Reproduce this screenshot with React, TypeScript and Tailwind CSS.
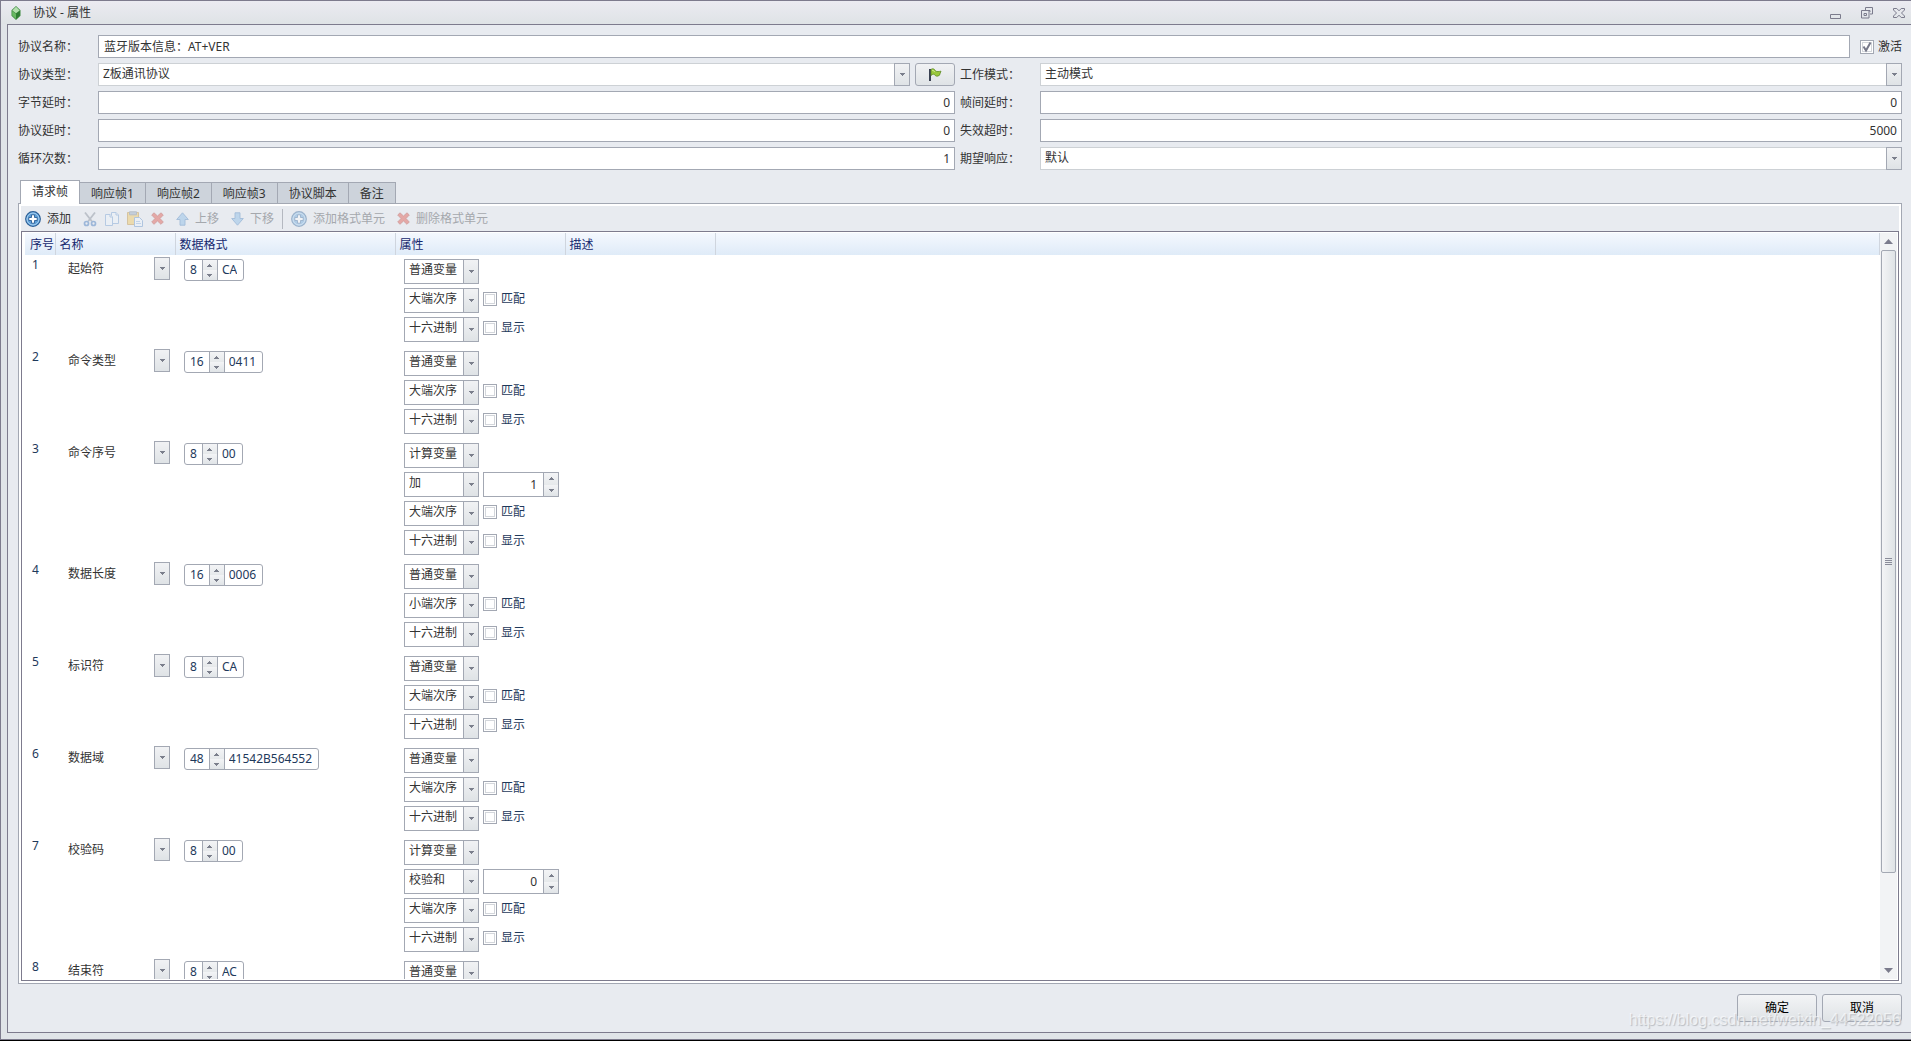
import type { ReactNode } from 'react';
import { clsx } from 'clsx';

interface FieldLine {
  value: string;
  check?: string;
  amount?: string;
}

interface UnitRow {
  name: string;
  bits: string;
  data: string;
  lines: FieldLine[];
}

const BIG: FieldLine = { value: '大端次序', check: '匹配' };
const LITTLE: FieldLine = { value: '小端次序', check: '匹配' };
const HEX: FieldLine = { value: '十六进制', check: '显示' };
const PLAIN: FieldLine = { value: '普通变量' };
const COMPUTED: FieldLine = { value: '计算变量' };

const rows: UnitRow[] = [
  { name: '起始符', bits: '8', data: 'CA', lines: [PLAIN, BIG, HEX] },
  { name: '命令类型', bits: '16', data: '0411', lines: [PLAIN, BIG, HEX] },
  { name: '命令序号', bits: '8', data: '00', lines: [COMPUTED, { value: '加', amount: '1' }, BIG, HEX] },
  { name: '数据长度', bits: '16', data: '0006', lines: [PLAIN, LITTLE, HEX] },
  { name: '标识符', bits: '8', data: 'CA', lines: [PLAIN, BIG, HEX] },
  { name: '数据域', bits: '48', data: '41542B564552', lines: [PLAIN, BIG, HEX] },
  { name: '校验码', bits: '8', data: '00', lines: [COMPUTED, { value: '校验和', amount: '0' }, BIG, HEX] },
  { name: '结束符', bits: '8', data: 'AC', lines: [PLAIN] },
];

const tabs = ['请求帧', '响应帧1', '响应帧2', '响应帧3', '协议脚本', '备注'];

/* Icons */

function Caret({ up = false }: { up?: boolean }) {
  return (
    <svg width="5" height="3" viewBox="0 0 5 3" fill="#7b7f8c" shapeRendering="crispEdges">
      <path d={up ? 'M2 0h1v1h1v1h1v1H0V2h1V1h1z' : 'M0 0h5v1H4v1H3v1H2V2H1V1H0z'} />
    </svg>
  );
}

function GemIcon() {
  return (
    <svg width="10" height="14" viewBox="0 0 10 14">
      <path d="M5 0 9.500 4.200v5.600L5 14 .5 9.800V4.200z" fill="#3c8a3e" />
      <path d="M5 .8 8.700 4.400 5 7.200 1.300 4.400z" fill="#b4e0ae" />
      <path d="M1.200 5 5 7.800V13L1.200 9.500z" fill="#68b962" />
      <path d="M8.800 5 5 7.800V13l3.800-3.500z" fill="#2f7d33" />
    </svg>
  );
}

function FlagIcon() {
  return (
    <svg width="14" height="14" viewBox="0 0 14 14">
      <path d="M2 1v12" stroke="#3a4152" strokeWidth="2" />
      <path d="M3 1.500c2-1.500 3.500-.5 4.500 1.500 1.500 1 3.500.5 5.500.2-.8 1-.8 3-1.500 4-2 1.500-4 1.300-5-.7C5.500 5.800 4 6.500 3 7.500z" fill="#9ac83c" stroke="#5d8a22" strokeWidth=".8" />
      <path d="M4 2.500c1.200-.6 2 .2 2.500 1.500" stroke="#d6ef95" fill="none" />
    </svg>
  );
}

function AddIcon() {
  return (
    <svg width="16" height="16" viewBox="0 0 16 16">
      <circle cx="8" cy="8" r="7.300" fill="#5d9fd8" stroke="#2b5f96" strokeWidth="1.200" />
      <circle cx="8" cy="8" r="6" fill="none" stroke="#b5d9f5" strokeWidth=".9" />
      <path d="M6.500 3.800h3v2.700h2.700v3H9.500v2.700h-3V9.500H3.800v-3h2.700z" fill="#fff" stroke="#2b5f96" strokeWidth=".9" />
    </svg>
  );
}

function CutIcon() {
  return (
    <svg width="14" height="16" viewBox="0 0 14 16" fill="none">
      <path d="M2 1.500 9 10.500M12 1.500 5 10.500" stroke="#7b8491" strokeWidth="1.800" />
      <circle cx="3.500" cy="12.500" r="2" stroke="#2f6cb8" strokeWidth="1.700" />
      <circle cx="10.500" cy="12.500" r="2" stroke="#2f6cb8" strokeWidth="1.700" />
    </svg>
  );
}

function CopyIcon() {
  return (
    <svg width="14" height="16" viewBox="0 0 14 16" fill="#eef5fd" stroke="#6d9ad0">
      <path d="M6.500 1.500h4.500l2.500 2.500v8.500h-7z" />
      <path d="M.5 3.500h4.500l2.500 2.500v8.500h-7z" />
      <path d="M5 3.500v2.500h2.500M11 1.500V4h2.500" />
    </svg>
  );
}

function PasteIcon() {
  return (
    <svg width="16" height="16" viewBox="0 0 16 16">
      <path d="M.5 1.500h11v12H.5z" fill="#f0c14b" stroke="#b98a2c" />
      <path d="M2.500.8h7v3h-7z" fill="#8fa5bd" stroke="#6f7c8c" />
      <path d="M7.500 6.500h5l3 3v6h-8z" fill="#eef5fd" stroke="#5f8ec6" />
      <path d="M9 10.500h4M9 12.500h5" stroke="#8cb1dd" />
    </svg>
  );
}

function DeleteIcon() {
  return (
    <svg width="13" height="13" viewBox="0 0 13 13">
      <path d="M3 .8 6.500 4 10 .8 12.300 3 9 6.500l3.300 3.500-2.300 2.300L6.500 9 3 12.300.7 10 4 6.500.7 3z" fill="#e0463a" stroke="#a92a22" strokeWidth=".8" />
    </svg>
  );
}

function ArrowIcon({ down = false }: { down?: boolean }) {
  return (
    <svg width="13" height="14" viewBox="0 0 13 14" className={clsx(down && 'rotate-180')}>
      <path d="M6.500.8 12.300 7.500H9v5.700H4V7.500H.7z" fill="#7fb5e6" stroke="#3c78b8" strokeWidth=".9" />
    </svg>
  );
}

function MinimizeIcon() {
  return (
    <svg width="11" height="13" viewBox="0 0 11 13" fill="none" stroke="#7b7b8c">
      <path d="M.5 8.500h10v4H.5z" />
    </svg>
  );
}

function RestoreIcon() {
  return (
    <svg width="12" height="12" viewBox="0 0 12 12" fill="none" stroke="#7b7b8c">
      <path d="M4.500 3V.5h7v6.500H9M.5 3.500h7.500v7.500H.5zM3 6.500h2.500v2H3zM7.500 3.500h1.500v1.500" />
    </svg>
  );
}

function CloseIcon() {
  return (
    <svg width="12" height="10" viewBox="0 0 12 10" fill="none" stroke="#7b7b8c">
      <path d="M.5.5h3.300L6 2.800 8.200.5h3.300v1.500L8.500 5l3 3v1.500H8.200L6 7.200 3.800 9.500H.5V8l3-3-3-3z" />
    </svg>
  );
}

/* Controls */

function DropButton({ label, className }: { label: string; className?: string }) {
  return (
    <button
      type="button"
      aria-label={label}
      className={clsx(
        'flex w-4 shrink-0 items-center justify-center border border-[#a3a8b3] bg-linear-to-b from-[#f1f2f4] to-[#dfe3e6]',
        className,
      )}
    >
      <Caret />
    </button>
  );
}

function Combo({ id, value }: { id: string; value: string }) {
  return (
    <div className="flex h-[23px] min-w-0 flex-1 bg-white">
      <select id={id} className="min-w-0 flex-1 appearance-none border border-r-0 border-[#cdd1d5] px-1 pb-0.5 outline-none">
        <option>{value}</option>
      </select>
      <DropButton label="展开" />
    </div>
  );
}

function TextField({ id, value, numeric = false }: { id: string; value: string; numeric?: boolean }) {
  return (
    <input
      id={id}
      defaultValue={value}
      className={clsx(
        'h-[23px] min-w-0 flex-1 border border-[#a3a8b3] bg-white outline-none',
        numeric ? 'px-1 text-right' : 'px-[5px] pb-0.5',
      )}
    />
  );
}

function Label({ htmlFor, children }: { htmlFor: string; children: ReactNode }) {
  return (
    <label htmlFor={htmlFor} className="self-center whitespace-nowrap">
      {children}
    </label>
  );
}

function Spinner({ className }: { className?: string }) {
  return (
    <div className={clsx('flex flex-col border-l border-[#a3a8b3]', className)}>
      <button type="button" aria-label="增加" className="flex flex-1 items-center justify-center bg-linear-to-b from-[#f3f4f6] to-[#e6e9eb]">
        <Caret up />
      </button>
      <button type="button" aria-label="减少" className="flex flex-1 items-center justify-center bg-linear-to-b from-[#f3f4f6] to-[#e0e4e7]">
        <Caret />
      </button>
    </div>
  );
}

function Check({ label, checked = false }: { label: string; checked?: boolean }) {
  return (
    <label className="flex items-center gap-1">
      <span className="grid size-3.5 shrink-0 border border-[#a3a8b3] bg-white">
        <input
          type="checkbox"
          defaultChecked={checked}
          className="peer m-px appearance-none border border-[#d3d6db] [grid-area:1/1]"
        />
        <svg
          viewBox="0 0 12 12"
          fill="none"
          stroke="#77798a"
          strokeWidth="2"
          className="pointer-events-none hidden size-3 [grid-area:1/1] peer-checked:block"
        >
          <path d="M2.500 5.500 5 9.500 9.500 1.500" />
        </svg>
      </span>
      {label}
    </label>
  );
}

function ToolButton({ icon, label, text, disabled = true }: { icon: ReactNode; label: string; text?: boolean; disabled?: boolean }) {
  return (
    <button
      type="button"
      disabled={disabled}
      aria-label={label}
      className="flex items-center gap-1.5 whitespace-nowrap text-[#333] disabled:text-[#a5a8ad]"
    >
      <span className={clsx(disabled && 'opacity-40')}>{icon}</span>
      {text && label}
    </button>
  );
}

/* Sections */

function TitleBar() {
  return (
    <header className="flex h-[23px] shrink-0 items-center bg-linear-to-b from-[#ebebf1] to-[#dfe3e6] pr-1.5 pl-2.5">
      <GemIcon />
      <h1 className="flex-1 pl-3 text-xs">协议 - 属性</h1>
      <div className="flex items-center gap-5">
        <button type="button" aria-label="最小化"><MinimizeIcon /></button>
        <button type="button" aria-label="还原"><RestoreIcon /></button>
        <button type="button" aria-label="关闭"><CloseIcon /></button>
      </div>
    </header>
  );
}

function ProtocolForm() {
  return (
    <div className="flex flex-col gap-[5px]">
      <div className="flex">
        <div className="grid flex-1 grid-cols-[80px_1fr]">
          <Label htmlFor="name">协议名称：</Label>
          <TextField id="name" value="蓝牙版本信息：AT+VER" />
        </div>
        <div className="flex w-[52px] justify-end">
          <Check label="激活" checked />
        </div>
      </div>
      <div className="grid grid-cols-[80px_1fr_80px_1fr] gap-y-[5px]">
        <Label htmlFor="type">协议类型：</Label>
        <div className="mr-[5px] flex gap-[5px]">
          <Combo id="type" value="Z板通讯协议" />
          <button
            type="button"
            aria-label="标记"
            className="flex w-10 items-center justify-center rounded-[3px] border border-[#a3a8b3] bg-linear-to-b from-[#f1f2f4] to-[#dfe3e6]"
          >
            <FlagIcon />
          </button>
        </div>
        <Label htmlFor="mode">工作模式：</Label>
        <Combo id="mode" value="主动模式" />

        <Label htmlFor="byteDelay">字节延时：</Label>
        <div className="mr-[5px] flex"><TextField id="byteDelay" value="0" numeric /></div>
        <Label htmlFor="frameDelay">帧间延时：</Label>
        <TextField id="frameDelay" value="0" numeric />

        <Label htmlFor="protocolDelay">协议延时：</Label>
        <div className="mr-[5px] flex"><TextField id="protocolDelay" value="0" numeric /></div>
        <Label htmlFor="timeout">失效超时：</Label>
        <TextField id="timeout" value="5000" numeric />

        <Label htmlFor="loops">循环次数：</Label>
        <div className="mr-[5px] flex"><TextField id="loops" value="1" numeric /></div>
        <Label htmlFor="expected">期望响应：</Label>
        <Combo id="expected" value="默认" />
      </div>
    </div>
  );
}

function TabStrip() {
  return (
    <div role="tablist" className="ml-0.5 flex h-[23px] shrink-0 items-end">
      {tabs.map((tab, i) => (
        <button
          key={tab}
          type="button"
          role="tab"
          aria-selected={i === 0}
          className={clsx(
            'border-t border-[#a3a8b3]',
            i === 0
              ? 'z-10 -mb-px h-6 border-x bg-white px-[11px] pb-0.5'
              : 'h-[21px] border-r bg-[#cdd3db] px-[11px] pt-0.5',
          )}
        >
          {tab}
        </button>
      ))}
    </div>
  );
}

function Toolbar() {
  return (
    <div role="toolbar" className="flex h-[25px] shrink-0 items-center gap-3 bg-[#e8ebf0] pl-1">
      <ToolButton icon={<AddIcon />} label="添加" text disabled={false} />
      <div className="flex items-center gap-2">
        <ToolButton icon={<CutIcon />} label="剪切" />
        <ToolButton icon={<CopyIcon />} label="复制" />
        <ToolButton icon={<PasteIcon />} label="粘贴" />
        <ToolButton icon={<DeleteIcon />} label="删除" />
      </div>
      <ToolButton icon={<ArrowIcon />} label="上移" text />
      <ToolButton icon={<ArrowIcon down />} label="下移" text />
      <div className="-mx-1 h-5 w-px bg-[#b4b8c0]" />
      <ToolButton icon={<AddIcon />} label="添加格式单元" text />
      <ToolButton icon={<DeleteIcon />} label="删除格式单元" text />
    </div>
  );
}

function LineEditor({ line }: { line: FieldLine }) {
  return (
    <div className="flex h-[25px] gap-1">
      <div className="flex w-[75px] bg-white">
        <select aria-label="属性" className="min-w-0 flex-1 appearance-none border border-r-0 border-[#a3a8b3] pb-1 pl-1 text-[#333] outline-none">
          <option>{line.value}</option>
        </select>
        <DropButton label="展开" />
      </div>
      {line.check && <div className="flex pb-1"><Check label={line.check} /></div>}
      {line.amount && (
        <div className="flex w-[76px] border border-[#a3a8b3]">
          <input aria-label="数值" defaultValue={line.amount} className="min-w-0 flex-1 pr-1.5 text-right text-[#333] outline-none" />
          <Spinner className="w-[15px]" />
        </div>
      )}
    </div>
  );
}

function UnitTable() {
  return (
    <table className="w-full table-fixed border-collapse text-left">
      <thead>
        <tr className="h-[22px] bg-linear-to-b from-[#f4f8fe] to-[#dfebf8] text-[#15286e]">
          <th className="w-[30px] pt-0.5 pl-[5px] font-normal whitespace-nowrap">序号</th>
          <th className="w-[120px] border-l border-[#cfd5de] pt-0.5 pl-1 font-normal">名称</th>
          <th className="w-[220px] border-l border-[#cfd5de] pt-0.5 pl-1 font-normal">数据格式</th>
          <th className="w-[170px] border-l border-[#cfd5de] pt-0.5 pl-1 font-normal">属性</th>
          <th className="w-[150px] border-l border-[#cfd5de] pt-0.5 pl-1 font-normal">描述</th>
          <th className="border-x border-[#cfd5de]" />
        </tr>
      </thead>
      <tbody className="text-[#1e395b]">
        {rows.map((row, i) => (
          <tr key={row.name} className="align-top">
            <td className="pt-0.5 pl-[7px] leading-4">{i + 1}</td>
            <td className="pt-0.5 pr-[5px] pl-[13px]">
              <div className="flex h-[23px]">
                <input aria-label="名称" defaultValue={row.name} className="min-w-0 flex-1 text-[#333] outline-none" />
                <DropButton label="展开" />
              </div>
            </td>
            <td className="pt-1 pl-[9px]">
              <div className="flex h-[22px] w-fit overflow-hidden rounded-[3px] border border-[#a3a8b3]">
                <input aria-label="位数" defaultValue={row.bits} className="field-sizing-content px-[5px] outline-none" />
                <Spinner className="w-[15px]" />
                <input aria-label="数据" defaultValue={row.data} className="field-sizing-content border-l border-[#a3a8b3] pr-1.5 pl-1 outline-none" />
              </div>
            </td>
            <td className="pt-1 pb-[5px] pl-[9px]">
              <div className="flex flex-col gap-1">
                {row.lines.map((line) => (
                  <LineEditor key={line.value} line={line} />
                ))}
              </div>
            </td>
            <td />
            <td />
          </tr>
        ))}
      </tbody>
    </table>
  );
}

function ScrollBar() {
  return (
    <div className="mr-px flex w-[17px] shrink-0 flex-col items-center bg-[#f2f3f5]">
      <button type="button" aria-label="向上滚动" className="flex h-[17px] shrink-0 items-center">
        <svg width="9" height="5" viewBox="0 0 9 5" fill="#7b7b8c"><path d="M4.500 0 9 5H0z" /></svg>
      </button>
      <div className="min-h-0 w-[15px] flex-1">
        <div className="flex h-7/8 items-center justify-center rounded-xs border border-[#a3a8b3] bg-linear-to-r from-[#f3f4f6] to-[#dfe3e6]">
          <svg width="7" height="7" viewBox="0 0 7 7" stroke="#8a8c9a" shapeRendering="crispEdges">
            <path d="M0 .5h7M0 2.500h7M0 4.500h7M0 6.500h7" />
          </svg>
        </div>
      </div>
      <button type="button" aria-label="向下滚动" className="flex h-[17px] shrink-0 items-center">
        <svg width="9" height="5" viewBox="0 0 9 5" fill="#7b7b8c"><path d="M0 0h9L4.500 5z" /></svg>
      </button>
    </div>
  );
}

function DialogButton({ children }: { children: ReactNode }) {
  return (
    <button
      type="button"
      className="h-7 w-20 rounded-[3px] border border-[#a3a8b3] bg-linear-to-b from-[#f3f4f6] to-[#dfe3e6] text-black"
    >
      {children}
    </button>
  );
}

export default function App() {
  return (
    <div className="relative flex h-screen flex-col border-b border-black bg-[#e0e4e8] font-['Noto_Sans','Noto_Sans_CJK_SC',sans-serif] text-xs text-[#333]">
      <div className="flex min-h-0 flex-1 flex-col border-t border-b border-l border-[#7d7b8d]">
        <TitleBar />
        <main className="mb-1.5 ml-1.5 flex min-h-0 flex-1 flex-col border-t border-b border-l border-[#7d7b8d] bg-[#e8ebf0] pt-2.5 pr-[9px] pb-2.5 pl-2.5">
          <ProtocolForm />
          <div className="mt-2.5 flex min-h-0 flex-1 flex-col">
            <TabStrip />
            <section className="flex min-h-0 flex-1 flex-col border border-[#a3a8b3] bg-white p-0.5">
              <Toolbar />
              <div className="flex min-h-0 flex-1 border border-[#7d7b8d] py-px">
                <div className="min-w-0 flex-1 overflow-hidden pl-[3px]">
                  <UnitTable />
                </div>
                <ScrollBar />
              </div>
            </section>
          </div>
          <footer className="mt-2.5 flex shrink-0 justify-end gap-[5px]">
            <DialogButton>确定</DialogButton>
            <DialogButton>取消</DialogButton>
          </footer>
        </main>
      </div>
      {/* watermark */}
      <p className="pointer-events-none absolute right-2.5 bottom-2 font-['Liberation_Sans',sans-serif] text-base text-white/60 [text-shadow:1px_1px_1px_#b8bcc2]">
        https://blog.csdn.net/weixin_44522056
      </p>
    </div>
  );
}
